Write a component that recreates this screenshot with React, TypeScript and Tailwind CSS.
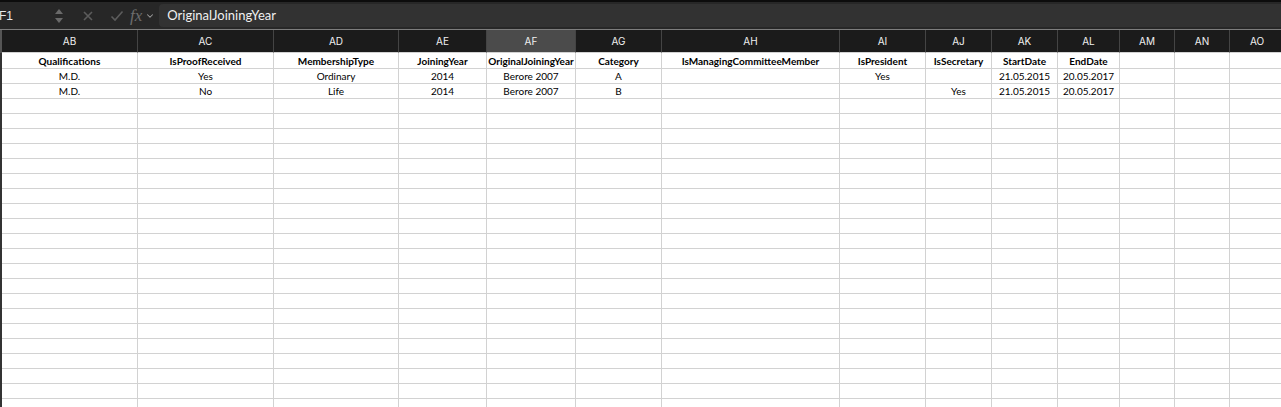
import { ChevronDown } from 'lucide-react'

const cols = [
  { id: 'AB', w: 'w-[136px]' },
  { id: 'AC', w: 'w-[136px]' },
  { id: 'AD', w: 'w-[125px]' },
  { id: 'AE', w: 'w-[88px]' },
  { id: 'AF', w: 'w-[89px]' },
  { id: 'AG', w: 'w-[86px]' },
  { id: 'AH', w: 'w-[178px]' },
  { id: 'AI', w: 'w-[86px]' },
  { id: 'AJ', w: 'w-[66px]' },
  { id: 'AK', w: 'w-[66px]' },
  { id: 'AL', w: 'w-[62px]' },
  { id: 'AM', w: 'w-[55px]' },
  { id: 'AN', w: 'w-[55px]' },
  { id: 'AO', w: 'w-[55px]' },
]

const titles = [
  'Qualifications',
  'IsProofReceived',
  'MembershipType',
  'JoiningYear',
  'OriginalJoiningYear',
  'Category',
  'IsManagingCommitteeMember',
  'IsPresident',
  'IsSecretary',
  'StartDate',
  'EndDate',
  '',
  '',
  '',
]

const data = [
  ['M.D.', 'Yes', 'Ordinary', '2014', 'Berore 2007', 'A', '', 'Yes', '', '21.05.2015', '20.05.2017', '', '', ''],
  ['M.D.', 'No', 'Life', '2014', 'Berore 2007', 'B', '', '', 'Yes', '21.05.2015', '20.05.2017', '', '', ''],
]

const blankRows = 22

function Row({ values, bold, tall }: { values: string[]; bold?: boolean; tall?: boolean }) {
  return (
    <div className={`flex shrink-0 ${tall ? 'h-[16px]' : 'h-[15px]'}`}>
      <div className="w-[2px] shrink-0 bg-[#333]" />
      {cols.map((c, i) => (
        <div
          key={c.id}
          className={`${c.w} shrink-0 border-r border-b border-[#d2d2d2] flex items-center justify-center overflow-hidden whitespace-nowrap text-[10px] leading-none text-black ${bold ? 'font-bold' : ''}`}
        >
          {values[i]}
        </div>
      ))}
    </div>
  )
}

function FormulaBar() {
  return (
    <div className="h-[30px] bg-[#272727] border-t-2 border-[#0c0c0c] border-b border-b-[#7d7d7d] flex items-center shrink-0">
      <div className="w-[51px] -ml-[1px] text-[12px] text-[#e8e8e8] font-['Liberation_Sans',sans-serif]">F1</div>
      <svg width="10" height="16" viewBox="0 0 10 16" className="ml-[4px]">
        <path d="M5 1 L9 6 H1 Z" fill="#6a6a6a" />
        <path d="M5 15 L9 10 H1 Z" fill="#6a6a6a" />
      </svg>
      <svg width="12" height="12" viewBox="0 0 12 12" className="ml-[18px]">
        <path d="M2 2 L10 10 M10 2 L2 10" stroke="#5c5c5c" strokeWidth="1.6" />
      </svg>
      <svg width="14" height="12" viewBox="0 0 14 12" className="ml-[16px]">
        <path d="M1.5 6.5 L5 10 L12.5 1.5" stroke="#5c5c5c" strokeWidth="1.6" fill="none" />
      </svg>
      <span className="ml-[6px] text-[17px] italic text-[#6d6d6d] font-['Liberation_Serif',serif] leading-none">fx</span>
      <ChevronDown className="ml-[3px] text-[#a0a0a0]" size={10} strokeWidth={2.5} />
      <div className="ml-[4px] h-[23px] flex-1 rounded-l-[4px] bg-[#323232] flex items-center pl-[8px] text-[13px] text-[#f0f0f0] font-['Lato',sans-serif]">
        OriginalJoiningYear
      </div>
    </div>
  )
}

function HeaderRow() {
  return (
    <div className="flex h-[23px] shrink-0 bg-[#1b1b1b]">
      <div className="w-[2px] shrink-0 bg-[#555]" />
      {cols.map((c) => (
        <div
          key={c.id}
          className={`${c.w} shrink-0 border-r border-b border-r-[#444] border-b-[#d2d2d2] flex items-center justify-center text-[10px] text-[#f0f0f0] font-['Inter',sans-serif] ${c.id === 'AF' ? 'bg-[#4b4b4b]' : ''}`}
        >
          {c.id}
        </div>
      ))}
    </div>
  )
}

export default function App() {
  return (
    <div className="w-[1281px] h-[407px] overflow-hidden flex flex-col bg-white font-['Lato',sans-serif]">
      <FormulaBar />
      <HeaderRow />
      <Row values={titles} bold tall />
      {data.map((r, i) => (
        <Row key={i} values={r} />
      ))}
      {Array.from({ length: blankRows }).map((_, i) => (
        <Row key={'b' + i} values={[]} />
      ))}
    </div>
  )
}
